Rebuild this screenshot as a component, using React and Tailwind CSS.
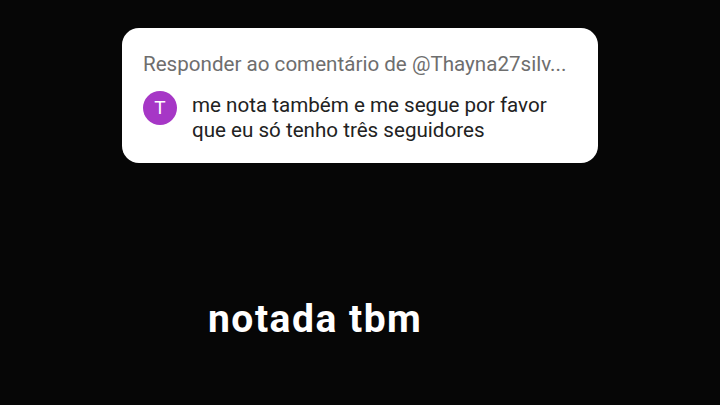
export default function App() {
  return (
    <div className="w-[720px] h-[405px] bg-[#060606] overflow-hidden flex flex-col items-start" style={{ fontFamily: "Roboto, 'Noto Sans', sans-serif" }}>
      <div className="ml-[122px] mt-[28px] w-[476px] h-[135px] bg-white rounded-[17px] pl-[21px] pr-[20px] pt-[23px]">
        <div className="text-[20.6px] leading-[26px] text-[#6e6e6e] whitespace-nowrap">Responder ao comentário de @Thayna27silv...</div>
        <div className="flex items-start mt-[14px] gap-[15px]">
          <div className="w-[34px] h-[34px] rounded-full bg-[#a637c6] text-white text-[19px] flex items-center justify-center shrink-0">T</div>
          <div className="mt-[2px] text-[20.6px] leading-[25px] text-[#222222] whitespace-nowrap">
            me nota também e me segue por favor<br />que eu só tenho três seguidores
          </div>
        </div>
      </div>
      <div className="ml-[208px] mt-[133px] text-white font-bold text-[39px] leading-[46px] tracking-[1.5px]">notada tbm</div>
    </div>
  );
}
